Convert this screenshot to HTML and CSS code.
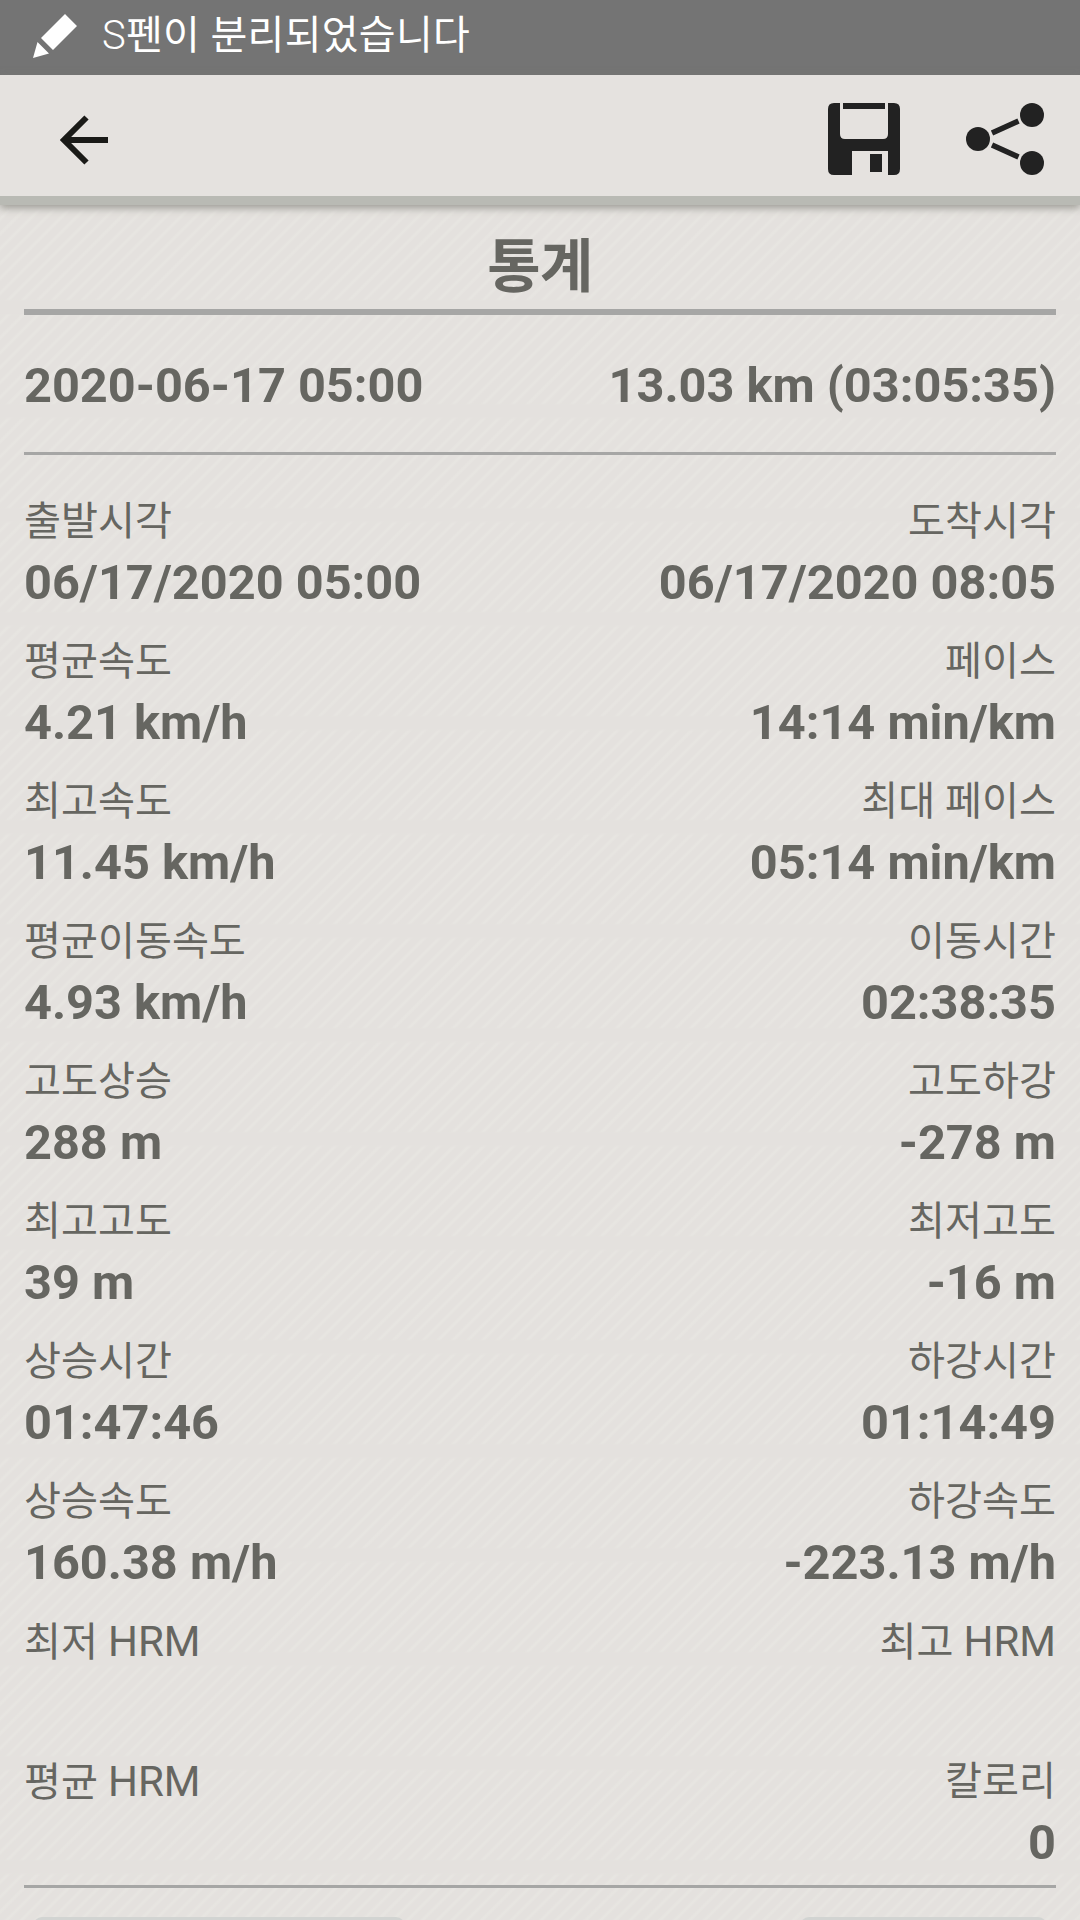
FILE: index.html
```html
<!DOCTYPE html>
<html lang="ko">
<head>
  <meta charset="UTF-8" />
  <meta name="viewport" content="width=device-width, initial-scale=1" />
  <title>통계</title>
  <link rel="stylesheet" href="styles.css">
</head>
<body>

<div class="statusbar">
  <svg class="pen" width="46" height="46" viewBox="0 0 46 46">
    <path d="M32 0 L44 12 L20 36 L8 24 Z M4.500 28 L16 39.500 L0 44 Z" fill="#fff" />
  </svg>
  <span class="notice"><span class="thin">S</span>펜이 분리되었습니다</span>
</div>

<header class="toolbar">
  <a class="back" href="#" aria-label="뒤로">
    <svg width="50" height="50" viewBox="0 0 50 50">
      <path d="M26.500 2.500 L4 25 L26.500 47.500 M4 25 H48" fill="none" stroke="#1a1a17" stroke-width="6" />
    </svg>
  </a>
  <div class="actions">
    <svg width="72" height="72" viewBox="0 0 72 72" fill="#222">
      <path d="M6 0H12V31Q12 36 17 36H55Q60 36 60 31V0H66Q72 0 72 6V66Q72 72 66 72H60V48H24V72H6Q0 72 0 66V6Q0 0 6 0Z" />
      <rect x="15" y="0" width="42" height="6" />
      <rect x="42" y="51" width="12" height="18" />
    </svg>
    <svg width="78" height="72" viewBox="0 0 78 72" fill="#222">
      <circle cx="12" cy="36" r="12" />
      <circle cx="66" cy="12" r="12" />
      <circle cx="66" cy="60" r="12" />
      <path d="M26 30 L52.500 18 M26 42 L52.500 54" stroke="#222" stroke-width="5.500" />
    </svg>
  </div>
</header>

<main class="content">
  <h1>통계</h1>

  <div class="summary">
    <span>2020-06-17 05:00</span>
    <span>13.03 km (03:05:35)</span>
  </div>

  <div class="stats">
    <div class="stat"><span class="label">출발시각</span><span class="value">06/17/2020 05:00</span></div>
    <div class="stat"><span class="label">도착시각</span><span class="value">06/17/2020 08:05</span></div>
    <div class="stat"><span class="label">평균속도</span><span class="value">4.21 km/h</span></div>
    <div class="stat"><span class="label">페이스</span><span class="value">14:14 min/km</span></div>
    <div class="stat"><span class="label">최고속도</span><span class="value">11.45 km/h</span></div>
    <div class="stat"><span class="label">최대 페이스</span><span class="value">05:14 min/km</span></div>
    <div class="stat"><span class="label">평균이동속도</span><span class="value">4.93 km/h</span></div>
    <div class="stat"><span class="label">이동시간</span><span class="value">02:38:35</span></div>
    <div class="stat"><span class="label">고도상승</span><span class="value">288 m</span></div>
    <div class="stat"><span class="label">고도하강</span><span class="value">-278 m</span></div>
    <div class="stat"><span class="label">최고고도</span><span class="value">39 m</span></div>
    <div class="stat"><span class="label">최저고도</span><span class="value">-16 m</span></div>
    <div class="stat"><span class="label">상승시간</span><span class="value">01:47:46</span></div>
    <div class="stat"><span class="label">하강시간</span><span class="value">01:14:49</span></div>
    <div class="stat"><span class="label">상승속도</span><span class="value">160.38 m/h</span></div>
    <div class="stat"><span class="label">하강속도</span><span class="value">-223.13 m/h</span></div>
    <div class="stat"><span class="label">최저 <b>HRM</b></span></div>
    <div class="stat"><span class="label">최고 <b>HRM</b></span></div>
    <div class="stat"><span class="label">평균 <b>HRM</b></span></div>
    <div class="stat"><span class="label">칼로리</span><span class="value">0</span></div>
  </div>

  <div class="buttons">
    <button type="button" class="btn btn-wide"></button>
    <button type="button" class="btn"></button>
  </div>
</main>

</body>
</html>
```
FILE: styles.css
```css
body {
  margin: 0;
  display: flex;
  flex-direction: column;
  height: 100vh;
  font-family: Roboto, "Noto Sans CJK KR", sans-serif;
  color: #666661;
  background-color: #e4e1de;
  /* plain strip every 104px over the diagonal hatch */
  background-image:
    repeating-linear-gradient(to bottom, #e4e1de 0, #e4e1de 12px, transparent 15px, transparent 102px, #e4e1de 104px),
    repeating-linear-gradient(135deg, #e4e1de 0, #e4e1de 5.5px, #e7e5e1 7.5px, #e7e5e1 8.5px, #e4e1de 10.5px);
  background-position: 0 93px, 0 0;
}
.statusbar {
  flex: none;
  display: flex;
  align-items: center;
  box-sizing: border-box;
  height: 75px;
  padding: 0 33px 5px;
  background: #747474;
  color: #fff;
  font-size: 40px;
  letter-spacing: 0.3px;
  white-space: nowrap;
}
.notice {
  margin-top: -7px;
}
.thin {
  font-weight: 300;
}
.pen {
  margin-right: 23px;
  margin-top: 4px;
}
.toolbar {
  flex: none;
  display: flex;
  justify-content: space-between;
  align-items: center;
  box-sizing: border-box;
  height: 130px;
  padding: 0 36px 0 60px;
  background: #e5e2df;
  border-bottom: 9px solid #b9bab4;
  box-shadow: 0 3px 8px rgba(125, 125, 117, 0.7);
}
.back svg {
  display: block;
  margin-top: 8px;
}
.actions {
  display: flex;
  gap: 66px;
  padding-top: 6px;
}
.content {
  flex: 1;
  min-height: 0;
  padding: 0 24px;
  overflow: hidden;
}
h1 {
  box-sizing: border-box;
  height: 110px;
  margin: 0;
  padding-top: 25px;
  border-bottom: 6px solid #a6a6a5;
  font-size: 58px;
  line-height: 74px;
  letter-spacing: -0.5px;
  text-align: center;
}
.summary {
  display: flex;
  justify-content: space-between;
  box-sizing: border-box;
  height: 140px;
  border-bottom: 3px solid #a6a6a5;
  font-size: 48.7px;
  font-weight: bold;
  line-height: 142px;
}
.stats {
  display: grid;
  grid-template-columns: 1fr 1fr;
  grid-auto-rows: 140px;
  box-sizing: border-box;
  height: 1433px;
  padding-top: 36px;
  border-bottom: 3px solid #a6a6a5;
}
.stat {
  display: flex;
  flex-direction: column;
  white-space: nowrap;
}
.stat:nth-child(even) {
  align-items: flex-end;
}
.label {
  font-size: 40.2px;
  line-height: 61px;
}
.label b {
  font-size: 42px;
  font-weight: normal;
}
.value {
  font-size: 48.7px;
  font-weight: bold;
  line-height: 62px;
}
.buttons {
  display: flex;
  justify-content: space-between;
  padding: 29px 9px 0;
}
.btn {
  width: 247px;
  height: 120px;
  border: none;
  border-radius: 9px;
  background: #d2d4d2;
}
.btn-wide {
  width: 372px;
}
```
